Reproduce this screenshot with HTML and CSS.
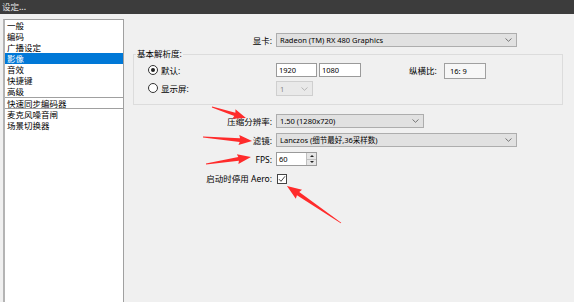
FILE: index.html
```html
<!DOCTYPE html>
<html lang="zh-CN">
<head>
<meta charset="utf-8">
<title>设定</title>
<link rel="stylesheet" href="styles.css">
</head>
<body>
<div class="window">
  <div class="titlebar">设定...</div>
  <div class="main">
    <ul class="nav">
      <li>一般</li>
      <li>编码</li>
      <li>广播设定</li>
      <li class="active">影像</li>
      <li>音效</li>
      <li>快捷键</li>
      <li>高级</li>
      <li class="boxed">快速同步编码器</li>
      <li>麦克风噪音闸</li>
      <li>场景切换器</li>
    </ul>
    <div class="panel">
      <div class="row">
        <span class="label">显卡:</span>
        <div class="select w-wide"><span class="val">Radeon (TM) RX 480 Graphics</span><svg class="chev" width="7" height="4" viewBox="0 0 7 4"><path d="M0.5 0.5 L3.5 3.3 L6.5 0.5" fill="none" stroke="#6a6a6a" stroke-width="0.9"/></svg></div>
      </div>
      <fieldset class="group">
        <legend>基本解析度:</legend>
        <div class="group-grid">
          <div class="radio-line"><span class="radio checked"></span><span>默认:</span></div>
          <div class="res-line">
            <div class="input w-w">1920</div>
            <div class="input w-h">1080</div>
            <span class="aspect-label">纵横比:</span>
            <div class="aspect">16: 9</div>
          </div>
          <div class="radio-line"><span class="radio"></span><span>显示屏:</span></div>
          <div class="select disabled w-mon"><span class="val">1</span><svg class="chev" width="7" height="4" viewBox="0 0 7 4"><path d="M0.5 0.5 L3.5 3.3 L6.5 0.5" fill="none" stroke="#b0b0b0" stroke-width="0.9"/></svg></div>
        </div>
      </fieldset>
      <div class="form">
        <span class="label">压缩分辨率:</span>
        <div class="select w-mid"><span class="val">1.50 (1280x720)</span><svg class="chev" width="7" height="4" viewBox="0 0 7 4"><path d="M0.5 0.5 L3.5 3.3 L6.5 0.5" fill="none" stroke="#6a6a6a" stroke-width="0.9"/></svg></div>

        <span class="label">滤镜:</span>
        <div class="select w-wide"><span class="val">Lanczos (细节最好,36采样数)</span><svg class="chev" width="7" height="4" viewBox="0 0 7 4"><path d="M0.5 0.5 L3.5 3.3 L6.5 0.5" fill="none" stroke="#6a6a6a" stroke-width="0.9"/></svg></div>

        <span class="label">FPS:</span>
        <div class="spin">
          <span class="val">60</span>
          <div class="spin-btns">
            <span class="spin-btn"><span class="tri-up"></span></span>
            <span class="spin-btn"><span class="tri-down"></span></span>
          </div>
        </div>

        <span class="label label-end">启动时停用 Aero:</span>
        <span class="check"><svg width="8" height="8" viewBox="0 0 8 8"><path d="M1 4.2 L3 6.3 L7 1.3" fill="none" stroke="#444" stroke-width="1"/></svg></span>
      </div>
    </div>
  </div>
  <svg class="arrows" width="574" height="302" viewBox="0 0 574 302">
    <g fill="#ff2b2b">
      <polygon transform="translate(212 107) rotate(17.9)" points="0,-0.4 24,-1.8 23,-5 35.7,0 23,5 24,1.8 0,0.4"/>
      <polygon transform="translate(203 137) rotate(4.7)" points="0,-0.4 37,-1.9 36,-5 49.2,0 36,5 37,1.9 0,0.4"/>
      <polygon transform="translate(206 164) rotate(-8.8)" points="0,-0.4 33,-1.9 32,-5 45.5,0 32,5 33,1.9 0,0.4"/>
      <polygon transform="translate(341 223) rotate(-145.6)" points="0,-0.4 52,-2 51,-5.5 65.5,0 51,5.5 52,2 0,0.4"/>
    </g>
  </svg>
</div>
</body>
</html>
```
FILE: styles.css
```css
* { box-sizing: border-box; }
html, body { margin: 0; padding: 0; }
body {
  width: 574px;
  height: 302px;
  overflow: hidden;
  background: #f0f0f0;
  font-family: "Noto Sans", "Noto Sans CJK SC", sans-serif;
  font-size: 8.5px;
  color: #000;
}
.window { position: relative; width: 574px; height: 302px; overflow: hidden; }

.titlebar {
  height: 14px;
  background: #3c3c3c;
  color: #e4e4e4;
  font-family: "Noto Sans CJK SC", sans-serif;
  font-size: 8.5px;
  line-height: 13px;
  padding-left: 2px;
}

.main { display: flex; align-items: flex-start; }

.nav {
  list-style: none;
  margin: 5px 0 0 3px;
  padding: 0;
  width: 121px;
  height: 300px;
  background: #fff;
  border: 1px solid #a0a0a0;
  border-left: 2px solid #b4b4b4;
  font-family: "Noto Sans CJK SC", sans-serif;
}
.nav li { height: 11px; line-height: 11px; padding-left: 2px; white-space: nowrap; }
.nav li.active { background: #0078d7; color: #fff; }
.nav li.boxed { height: 12px; line-height: 10px; border-top: 1px solid #a0a0a0; border-bottom: 1px solid #a0a0a0; }

.panel { flex: 1; padding-top: 19px; }

.row, .form {
  display: grid;
  grid-template-columns: 148px auto;
  column-gap: 4px;
  align-items: center;
  justify-items: start;
}
.form { row-gap: 5px; margin-top: 9px; }
.label { justify-self: end; white-space: nowrap; line-height: 11px; }
.label-end { align-self: end; }

.select {
  height: 14px;
  border: 1px solid #adadad;
  background: #e1e1e1;
  display: flex;
  align-items: center;
  justify-content: space-between;
  padding: 0 4px 0 3px;
  font-size: 7.5px;
  white-space: nowrap;
}
.select .val { line-height: 12px; }
.select.disabled { height: 15px; background: #e9e9e9; border-color: #cfcfcf; color: #8a8a8a; }
.w-wide { width: 241px; }
.w-mid { width: 148px; }
.w-mon { width: 37px; }

.group {
  margin: 1px 0 0 9px;
  width: 430px;
  min-width: 0;
  border: 1px solid #dcdcdc;
  padding: 3px 0 8px 14px;
}
.group legend {
  margin-left: -12px;
  padding: 0 1px;
  line-height: 12px;
}
.group-grid {
  display: grid;
  grid-template-columns: 128px auto;
  grid-template-rows: 16px 15px;
  row-gap: 2px;
  align-items: start;
  justify-items: start;
}
.radio-line { display: flex; align-items: center; gap: 3px; height: 14px; line-height: 11px; }
.radio {
  width: 10px; height: 10px;
  border: 1px solid #333;
  border-radius: 50%;
  background: #fff;
  display: flex; align-items: center; justify-content: center;
}
.radio.checked::after {
  content: "";
  width: 4px; height: 4px;
  border-radius: 50%;
  background: #222;
}

.res-line { display: flex; align-items: flex-start; }
.input {
  height: 14px;
  border: 1px solid #9a9a9a;
  background: #fff;
  padding-left: 2px;
  font-size: 7.5px;
  line-height: 12px;
}
.w-w { width: 41px; margin-right: 2px; }
.w-h { width: 42px; }
.aspect-label { margin-left: 48px; width: 35px; line-height: 16px; white-space: nowrap; }
.aspect {
  width: 42px; height: 16px;
  border: 1px solid #a0a0a0;
  background: #f7f7f7;
  padding-left: 5px;
  font-size: 7.5px;
  line-height: 14px;
}

.spin {
  width: 41px; height: 14px;
  border: 1px solid #9a9a9a;
  background: #fff;
  display: flex;
  font-size: 7.5px;
}
.spin .val { padding-left: 2px; line-height: 12px; }
.spin-btns { margin-left: auto; width: 10px; display: flex; flex-direction: column; }
.spin-btn {
  flex: 1;
  background: #e6e6e6;
  border-left: 1px solid #c0c0c0;
  display: flex; align-items: center; justify-content: center;
}
.spin-btn + .spin-btn { border-top: 1px solid #c0c0c0; }
.tri-up { width: 0; height: 0; border-left: 2px solid transparent; border-right: 2px solid transparent; border-bottom: 2px solid #222; }
.tri-down { width: 0; height: 0; border-left: 2px solid transparent; border-right: 2px solid transparent; border-top: 2px solid #222; }

.check {
  margin-top: 3px;
  margin-left: 1px;
  width: 10px; height: 10px;
  border: 1px solid #444;
  background: #fff;
  display: flex; align-items: center; justify-content: center;
}

.arrows { position: absolute; left: 0; top: 0; pointer-events: none; }
```
